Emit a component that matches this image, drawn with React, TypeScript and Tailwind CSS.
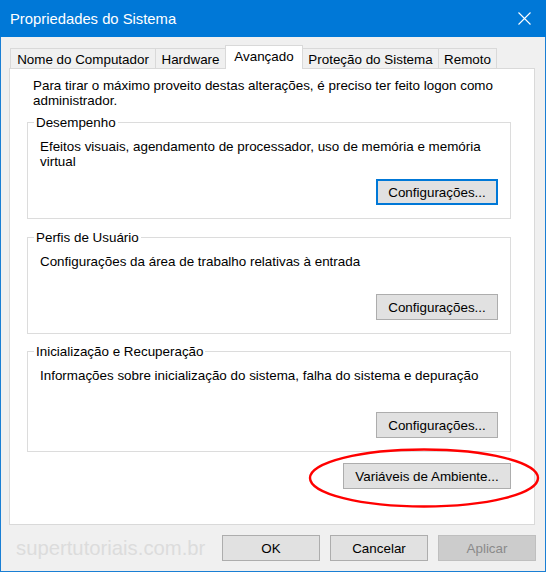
export default function App() {
  return (
    <div className="relative w-[546px] h-[572px] flex flex-col bg-[#f0f0f0] border border-[#1a7fd4] font-['Liberation_Sans',Arial,sans-serif] text-black text-[13.4px] leading-[15px]">
      {/* Title bar */}
      <div className="h-[37px] -mt-px -mx-px bg-[#0078d7] flex items-center justify-between pl-[10px] pr-[15px] shrink-0">
        <span className="text-white text-[14.8px] leading-[18px]">Propriedades do Sistema</span>
        <svg width="13" height="13" viewBox="0 0 13 13" className="block">
          <path d="M0.5 0.5 L12.5 12.5 M12.5 0.5 L0.5 12.5" stroke="#ffffff" strokeWidth="1.1" fill="none" />
        </svg>
      </div>

      {/* Tabs */}
      <div className="flex items-end h-[31px] pt-[8px] pl-[9px] shrink-0">
        <div className="w-[146px] h-[20px] flex items-center justify-center pt-[1px] border border-b-0 border-[#d9d9d9] bg-[#f0f0f0]">Nome do Computador</div>
        <div className="-ml-px w-[71px] h-[20px] flex items-center justify-center pt-[1px] border border-b-0 border-[#d9d9d9] bg-[#f0f0f0]">Hardware</div>
        <div className="-ml-px relative z-10 w-[78px] h-[24px] -mb-px flex items-center justify-center pb-[2px] border border-b-0 border-[#d9d9d9] bg-white">Avançado</div>
        <div className="-ml-px w-[137px] h-[20px] flex items-center justify-center pt-[1px] border border-b-0 border-[#d9d9d9] bg-[#f0f0f0]">Proteção do Sistema</div>
        <div className="-ml-px w-[59px] h-[20px] flex items-center justify-center pt-[1px] border border-b-0 border-[#d9d9d9] bg-[#f0f0f0]">Remoto</div>
      </div>

      {/* Panel */}
      <div className="ml-[8px] w-[526px] h-[457px] shrink-0 bg-white border border-[#d9d9d9] pt-[9px] pl-[17px] pr-[23px] flex flex-col">
        <div className="ml-[6px]">
          <div>Para tirar o máximo proveito destas alterações, é preciso ter feito logon como</div>
          <div>administrador.</div>
        </div>

        {/* Desempenho */}
        <div className="mt-[14px] h-[97px] border border-[#dcdcdc] flex flex-col">
          <div className="-mt-[8px] ml-[6px] px-[2px] bg-white w-fit">Desempenho</div>
          <div className="mt-[9px] pl-[12px]">
            <div>Efeitos visuais, agendamento de processador, uso de memória e memória</div>
            <div>virtual</div>
          </div>
          <div className="mt-auto flex justify-end pr-[12px] pb-[13px]">
            <button className="w-[122px] h-[26px] bg-[#e1e1e1] border-2 border-[#0078d7] flex items-center justify-center">Configurações...</button>
          </div>
        </div>

        {/* Perfis de Usuário */}
        <div className="mt-[18px] h-[97px] border border-[#dcdcdc] flex flex-col">
          <div className="-mt-[8px] ml-[6px] px-[2px] bg-white w-fit">Perfis de Usuário</div>
          <div className="mt-[9px] pl-[12px]">Configurações da área de trabalho relativas à entrada</div>
          <div className="mt-auto flex justify-end pr-[12px] pb-[13px]">
            <button className="w-[122px] h-[26px] bg-[#e1e1e1] border border-[#adadad] flex items-center justify-center">Configurações...</button>
          </div>
        </div>

        {/* Inicialização e Recuperação */}
        <div className="mt-[17px] h-[101px] border border-[#dcdcdc] flex flex-col">
          <div className="-mt-[8px] ml-[6px] px-[2px] bg-white w-fit">Inicialização e Recuperação</div>
          <div className="mt-[9px] pl-[12px]">Informações sobre inicialização do sistema, falha do sistema e depuração</div>
          <div className="mt-auto flex justify-end pr-[12px] pb-[13px]">
            <button className="w-[122px] h-[26px] bg-[#e1e1e1] border border-[#adadad] flex items-center justify-center">Configurações...</button>
          </div>
        </div>

        <div className="mt-[11px] flex justify-end">
          <button className="w-[168px] h-[26px] bg-[#e1e1e1] border border-[#adadad] flex items-center justify-center">Variáveis de Ambiente...</button>
        </div>
      </div>

      {/* Bottom row */}
      <div className="flex items-center mt-[10px] pl-[15px] pr-[9px] h-[26px] shrink-0">
        <span className="mr-auto text-[20.3px] leading-[26px] text-[#dcdcdc]">supertutoriais.com.br</span>
        <div className="flex gap-[10px]">
          <button className="w-[98px] h-[26px] bg-[#e1e1e1] border border-[#adadad] flex items-center justify-center">OK</button>
          <button className="w-[98px] h-[26px] bg-[#e1e1e1] border border-[#adadad] flex items-center justify-center">Cancelar</button>
          <button className="w-[98px] h-[26px] bg-[#cccccc] border border-[#bfbfbf] text-[#8a8a8a] flex items-center justify-center">Aplicar</button>
        </div>
      </div>

      {/* Red annotation ellipse */}
      <svg className="absolute left-[307px] top-[446px] pointer-events-none" width="233" height="62" viewBox="0 0 233 62">
        <ellipse cx="116" cy="31" rx="114" ry="28.5" fill="none" stroke="#ff0000" strokeWidth="2.4" />
      </svg>
    </div>
  );
}
